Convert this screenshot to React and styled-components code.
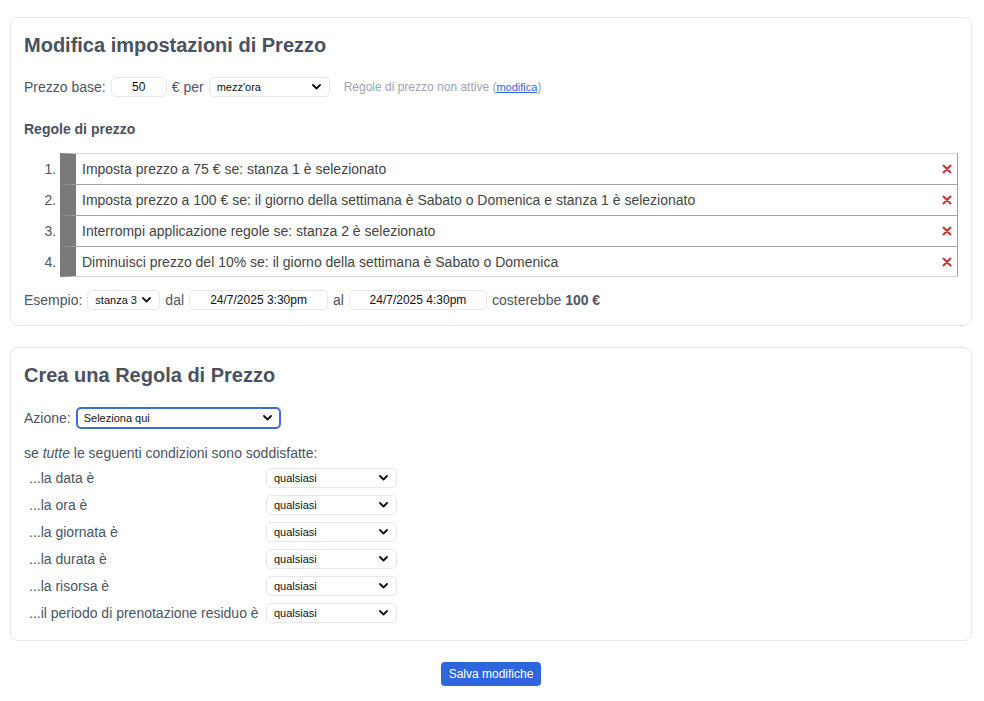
import React from "react"
import styled, { createGlobalStyle } from "styled-components"

const color = {
  text: "#4b5563",
  heading: "#4a5160",
  muted: "#9ca3af",
  line: "#e5e7eb",
  rule: "#a3a3a3",
  bar: "#7a7a7a",
  red: "#d32f2f",
  blue: "#2f66e0",
}

const GlobalStyle = createGlobalStyle`
  body {
    margin: 0;
    font-family: "Liberation Sans", Arial, sans-serif;
    color: ${color.text};
    background: #fff;
  }
  * { box-sizing: border-box; }
`

const rules = [
  "Imposta prezzo a 75 € se: stanza 1 è selezionato",
  "Imposta prezzo a 100 € se: il giorno della settimana è Sabato o Domenica e stanza 1 è selezionato",
  "Interrompi applicazione regole se: stanza 2 è selezionato",
  "Diminuisci prezzo del 10% se: il giorno della settimana è Sabato o Domenica",
]

const conditions = [
  "...la data è",
  "...la ora è",
  "...la giornata è",
  "...la durata è",
  "...la risorsa è",
  "...il periodo di prenotazione residuo è",
]

function Chevron() {
  return (
    <ChevronIcon width="9" height="6" viewBox="0 0 9 6">
      <path d="M1 1l3.5 3.5L8 1" fill="none" stroke="#111" strokeWidth="1.8" strokeLinecap="round" strokeLinejoin="round" />
    </ChevronIcon>
  )
}

function Select({ value, width, focused }) {
  return (
    <SelectWrap $width={width}>
      <SelectBox $focused={focused} defaultValue={value}>
        <option>{value}</option>
      </SelectBox>
      <Chevron />
    </SelectWrap>
  )
}

function RemoveIcon() {
  return (
    <svg width="10" height="10" viewBox="0 0 10 10">
      <path d="M1.5 1.5l7 7M8.5 1.5l-7 7" stroke={color.red} strokeWidth="2" strokeLinecap="round" />
    </svg>
  )
}

export default function App() {
  return (
    <Page>
      <GlobalStyle />
      <Card>
        <Title>Modifica impostazioni di Prezzo</Title>
        <FormRow $top={18}>
          Prezzo base:
          <TextInput $width={56} defaultValue="50" />
          € per
          <Select value="mezz'ora" width={121} />
          <Note>
            Regole di prezzo non attive (<NoteLink href="#">modifica</NoteLink>)
          </Note>
        </FormRow>
        <SubTitle>Regole di prezzo</SubTitle>
        <RuleList>
          {rules.map((r) => (
            <RuleItem key={r}>
              <RuleBody>
                <span>{r}</span>
                <RemoveIcon />
              </RuleBody>
            </RuleItem>
          ))}
        </RuleList>
        <FormRow $top={13}>
          Esempio:
          <Select value="stanza 3" width={73} />
          dal
          <TextInput $width={139} defaultValue="24/7/2025 3:30pm" />
          al
          <TextInput $width={138} defaultValue="24/7/2025 4:30pm" />
          <span>
            costerebbe <strong>100 €</strong>
          </span>
        </FormRow>
      </Card>

      <Card $top={21} $bottom={17}>
        <Title>Crea una Regola di Prezzo</Title>
        <FormRow $top={18} $height={22}>
          Azione:
          <Select value="Seleziona qui" width={205} focused />
        </FormRow>
        <Intro>
          se <em>tutte</em> le seguenti condizioni sono soddisfatte:
        </Intro>
        <ConditionGrid>
          {conditions.map((c) => (
            <React.Fragment key={c}>
              <ConditionLabel>{c}</ConditionLabel>
              <Select value="qualsiasi" width={131} />
            </React.Fragment>
          ))}
        </ConditionGrid>
      </Card>

      <Actions>
        <SaveButton>Salva modifiche</SaveButton>
      </Actions>
    </Page>
  )
}

const Page = styled.div`
  padding: 17px 12px 20px 10px;
`

const Card = styled.section`
  margin-top: ${(p) => p.$top || 0}px;
  border: 1px solid ${color.line};
  border-radius: 8px;
  padding: 13px 13px ${(p) => p.$bottom || 15}px 13px;
`

const Title = styled.h2`
  margin: 0;
  font-size: 20px;
  line-height: 28px;
  font-weight: 700;
  color: ${color.heading};
`

const FormRow = styled.div`
  display: flex;
  align-items: center;
  gap: 5px;
  margin-top: ${(p) => p.$top}px;
  font-size: 14px;
  height: ${(p) => p.$height || 20}px;
  color: ${color.text};

  strong {
    font-weight: 700;
  }
`

const TextInput = styled.input`
  width: ${(p) => p.$width}px;
  height: 20px;
  border: 1px solid ${color.line};
  border-radius: 5px;
  font-family: inherit;
  font-size: 12px;
  color: #111;
  text-align: center;
  padding: 0 4px;
  outline: none;
`

const SelectWrap = styled.div`
  position: relative;
  width: ${(p) => p.$width}px;
  display: inline-block;
`

const SelectBox = styled.select`
  appearance: none;
  display: block;
  width: 100%;
  height: ${(p) => (p.$focused ? 22 : 20)}px;
  border: ${(p) => (p.$focused ? `2px solid #3b6ed8` : `1px solid ${color.line}`)};
  border-radius: 5px;
  background: #fff;
  font-family: inherit;
  font-size: 11px;
  color: #111;
  padding: 0 20px 0 ${(p) => (p.$focused ? 6 : 7)}px;
  outline: none;
`

const ChevronIcon = styled.svg`
  position: absolute;
  right: 9px;
  top: 50%;
  margin-top: -3px;
  pointer-events: none;
`

const Note = styled.span`
  margin-left: 9px;
  font-size: 12px;
  color: ${color.muted};
`

const NoteLink = styled.a`
  font-size: 11px;
  color: #2f66e0;
`

const SubTitle = styled.h3`
  margin: 22px 0 0;
  font-size: 14px;
  line-height: 20px;
  font-weight: 700;
  color: ${color.heading};
`

const RuleList = styled.ol`
  margin: 14px 0 0;
  padding-left: 36px;
  font-size: 14px;
  color: ${color.text};

  li::marker {
    color: #555;
  }
`

const RuleItem = styled.li`
  height: 31px;
  border: 1px solid ${color.rule};
  border-left: 16px solid ${color.bar};
  border-bottom: none;
  color: #444;

  &:first-child {
    border-top-color: #d4d4d4;
  }

  &:last-child {
    border-bottom: 1px solid #d4d4d4;
  }
`

const RuleBody = styled.div`
  display: flex;
  align-items: center;
  justify-content: space-between;
  height: 100%;
  padding: 0 5px 0 6px;
`

const Intro = styled.p`
  margin: 14px 0 0;
  font-size: 14px;
  line-height: 20px;
  color: ${color.text};
`

const ConditionGrid = styled.div`
  display: grid;
  grid-template-columns: 233px auto;
  justify-content: start;
  align-items: center;
  column-gap: 4px;
  row-gap: 7px;
  margin-top: 5px;
  padding-left: 5px;
`

const ConditionLabel = styled.span`
  font-size: 14px;
  white-space: nowrap;
  color: ${color.text};
`

const Actions = styled.div`
  display: flex;
  justify-content: center;
  margin-top: 21px;
`

const SaveButton = styled.button`
  height: 24px;
  padding: 0 8px;
  border: none;
  border-radius: 4px;
  background: ${color.blue};
  color: #fff;
  font-family: inherit;
  font-size: 12px;
  cursor: pointer;
`
